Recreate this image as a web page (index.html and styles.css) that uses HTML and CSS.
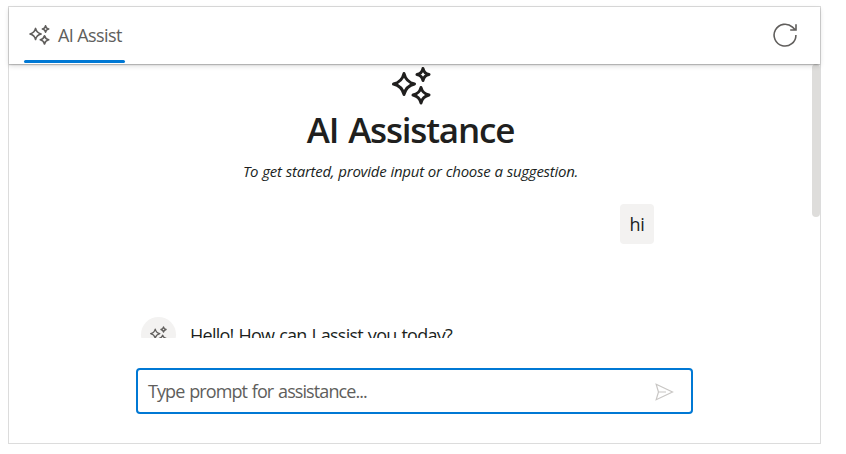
FILE: index.html
```html
<!DOCTYPE html>
<html lang="en">
<head>
<meta charset="utf-8">
<title>AI Assist</title>
<link rel="stylesheet" href="styles.css">
</head>
<body>
<svg class="defs" aria-hidden="true">
  <symbol id="sparkle" viewBox="0 0 39 38">
    <path d="M12 6.500Q14 15 22.500 17Q14 19 12 27.500Q10 19 1.500 17Q10 15 12 6.500Z"/>
    <path d="M31 1.500Q32 6.500 37 7.500Q32 8.500 31 13.500Q30 8.500 25 7.500Q30 6.500 31 1.500Z"/>
    <path d="M29 20.500Q30.500 26.500 37 28Q30.500 29.500 29 36Q27.500 29.500 21 28Q27.500 26.500 29 20.500Z"/>
  </symbol>
</svg>
<main class="assist">
  <header class="toolbar">
    <div class="tab">
      <svg class="tab-icon"><use href="#sparkle"/></svg>
      <span class="tab-label">AI Assist</span>
    </div>
    <svg class="refresh" viewBox="0 0 26 26"><path d="M23.900 13A10.900 10.900 0 1 1 20.500 5.200L23.500 8M24 2.200V8H18.200"/></svg>
  </header>
  <section class="content">
    <div class="banner">
      <svg class="banner-icon"><use href="#sparkle"/></svg>
      <h1 class="title">AI Assistance</h1>
      <p class="subtitle">To get started, provide input or choose a suggestion.</p>
    </div>
    <div class="messages">
      <div class="prompt">hi</div>
      <div class="response">
        <span class="avatar"><svg class="avatar-icon"><use href="#sparkle"/></svg></span>
        <span class="reply">Hello! How can I assist you today?</span>
      </div>
    </div>
    <div class="scroll-thumb"></div>
  </section>
  <footer class="footer">
    <div class="input">
      <span class="placeholder">Type prompt for assistance...</span>
      <svg class="send" viewBox="0 0 19 18"><path d="M1.200 1.300L17.500 9L1.200 16.700L3.500 9ZM3.500 9H11"/></svg>
    </div>
  </footer>
</main>
</body>
</html>
```
FILE: styles.css
```css
* { box-sizing: border-box; }
body {
  margin: 0;
  padding: 6px 0 0 8px;
  background: #fff;
  color: #201f1e;
  font-family: "Segoe UI", "Open Sans", "Noto Sans", sans-serif;
}
.defs { position: absolute; width: 0; height: 0; }
svg { fill: none; stroke: currentColor; flex: none; }
.tab-icon, .banner-icon, .avatar-icon { stroke-linejoin: round; }
.assist {
  width: 813px;
  height: 438px;
  border: 1px solid #dcdcdc;
  display: flex;
  flex-direction: column;
}
.toolbar {
  height: 57px;
  flex: none;
  display: flex;
  justify-content: space-between;
  padding: 0 22px 0 15px;
  color: #605e5c;
  box-shadow: 0 1px 1px rgba(0, 0, 0, .22), 0 2px 5px rgba(0, 0, 0, .14);
  position: relative;
  z-index: 1;
  background: #fff;
}
.tab {
  position: relative;
  width: 101px;
  height: 56px;
  display: flex;
  align-items: center;
  padding-left: 5px;
}
.tab::after {
  content: "";
  position: absolute;
  left: 0;
  right: 0;
  bottom: 0;
  height: 3px;
  border-radius: 2px;
  background: #0078d4;
}
.tab-icon { width: 21px; height: 20px; stroke-width: 3.1; margin-right: 8px; }
.tab-label { font-size: 18px; letter-spacing: -.6px; white-space: nowrap; }
.refresh { width: 26px; height: 26px; margin-top: 15px; stroke-width: 1.6; }
.content {
  position: relative;
  height: 274px;
  flex: none;
  overflow: hidden;
}
.banner { display: flex; flex-direction: column; align-items: center; padding: 3px 8px 0 0; }
.banner-icon { width: 39px; height: 38px; margin-left: 1px; stroke-width: 3; }
.title { margin: 1px 0 0; font-size: 35px; line-height: 48px; font-weight: 600; letter-spacing: -1.2px; word-spacing: 2px; white-space: nowrap; }
.subtitle { margin: 5px 0 0; font-size: 15px; line-height: 24px; font-style: italic; letter-spacing: -.26px; word-spacing: .4px; white-space: nowrap; }
.messages { width: 513px; margin: 21px 0 0 132px; display: flex; flex-direction: column; }
.prompt {
  align-self: flex-end;
  width: 34px;
  height: 40px;
  border-radius: 4px;
  background: #f3f2f1;
  text-align: center;
  font-size: 18px;
  line-height: 40px;
  letter-spacing: -.3px;
}
.response { display: flex; margin-top: 73px; }
.avatar { width: 35px; height: 35px; border-radius: 50%; background: #f3f2f1; color: #605e5c; display: flex; justify-content: center; align-items: center; }
.avatar-icon { width: 17px; height: 17px; stroke-width: 3; }
.reply { margin-left: 14px; font-size: 18px; line-height: 36px; letter-spacing: -.75px; word-spacing: 1px; white-space: nowrap; }
.scroll-thumb { position: absolute; right: 0; top: 0; width: 8px; height: 153px; border-radius: 4px; background: #dedddb; }
.footer { flex: 1; padding: 30px 0 0 127px; }
.input {
  width: 557px;
  height: 46px;
  border: 2px solid #0078d4;
  border-radius: 4px;
  padding: 0 17px 0 10px;
  display: flex;
  align-items: center;
  justify-content: space-between;
}
.placeholder { color: #605e5c; font-size: 18px; letter-spacing: -.91px; word-spacing: 1px; white-space: nowrap; }
.send { width: 19px; height: 18px; color: #c8c6c4; stroke-width: 1.2; margin-top: 2px; }
```
